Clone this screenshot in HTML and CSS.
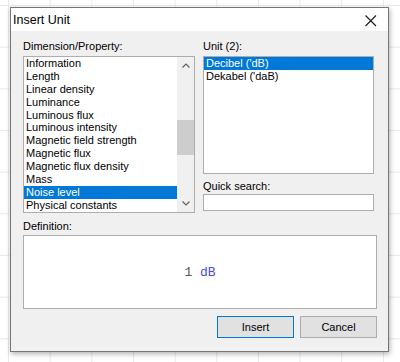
FILE: index.html
```html
<!DOCTYPE html>
<html lang="en">
<head>
    <meta charset="UTF-8">
    <meta name="viewport" content="width=device-width, initial-scale=1.0">
    <title>Insert Unit</title>
    <link rel="stylesheet" href="styles.css">
</head>
<body>
    <div class="dialog">
        <div class="titlebar">
            <span class="title">Insert Unit</span>
            <svg class="close" width="12" height="12" viewBox="0 0 12 12">
                <path d="M0.5 0.5 L11 11 M11 0.5 L0.5 11" stroke="#1a1a1a" stroke-width="1.1" fill="none"/>
            </svg>
        </div>

        <div class="content">
            <div class="columns">
                <div class="col">
                    <div class="label">Dimension/Property:</div>
                    <div class="listbox dims">
                        <div class="items">
                            <div class="item">Information</div>
                            <div class="item">Length</div>
                            <div class="item">Linear density</div>
                            <div class="item">Luminance</div>
                            <div class="item">Luminous flux</div>
                            <div class="item">Luminous intensity</div>
                            <div class="item">Magnetic field strength</div>
                            <div class="item">Magnetic flux</div>
                            <div class="item">Magnetic flux density</div>
                            <div class="item">Mass</div>
                            <div class="item selected">Noise level</div>
                            <div class="item">Physical constants</div>
                        </div>
                        <div class="scrollbar">
                            <div class="arrow">
                                <svg width="8" height="5" viewBox="0 0 8 5"><path d="M0.5 4.5 L4 1 L7.5 4.5" stroke="#606060" stroke-width="1.2" fill="none"/></svg>
                            </div>
                            <div class="track"><div class="thumb"></div></div>
                            <div class="arrow">
                                <svg width="8" height="5" viewBox="0 0 8 5"><path d="M0.5 0.5 L4 4 L7.5 0.5" stroke="#606060" stroke-width="1.2" fill="none"/></svg>
                            </div>
                        </div>
                    </div>
                </div>

                <div class="col">
                    <div class="label">Unit (2):</div>
                    <div class="listbox units">
                        <div class="items">
                            <div class="item selected">Decibel ('dB)</div>
                            <div class="item">Dekabel ('daB)</div>
                        </div>
                    </div>
                    <div class="label search-label">Quick search:</div>
                    <input type="text" class="search">
                </div>
            </div>

            <div class="label def-label">Definition:</div>
            <div class="definition">
                <span class="formula"><span class="num">1</span> <span class="unit">dB</span></span>
            </div>

            <div class="buttons">
                <button class="btn default">Insert</button>
                <button class="btn">Cancel</button>
            </div>
        </div>
    </div>
</body>
</html>
```

FILE: styles.css
```css
body {
    margin: 0;
    width: 400px;
    height: 362px;
    font-family: 'Liberation Sans', Arial, sans-serif;
    font-size: 11px;
    color: #000;
    background-color: #fff;
    background-image:
        linear-gradient(to right, #e9e9e9 1px, transparent 1px),
        linear-gradient(to bottom, #e9e9e9 1px, transparent 1px);
    background-size: 41.67px 41.67px;
    background-position: 8px 5px;
    overflow: hidden;
}

.dialog {
    margin: 7px 0 0 10px;
    width: 377px;
    height: 343px;
    border: 1px solid #767676;
    background-color: #f0f0f0;
    box-shadow: 1px 2px 5px rgba(0, 0, 0, 0.3);
}

.titlebar {
    height: 23px;
    background-color: #fff;
    display: flex;
    align-items: center;
    justify-content: space-between;
    padding: 0 11px 0 2px;
}

.title {
    font-size: 12.5px;
    padding-top: 1px;
}

.close {
    margin-top: 2px;
}

.content {
    padding: 9px 11px 0 12px;
}

.columns {
    display: grid;
    grid-template-columns: 172px 171px;
    column-gap: 8px;
    height: 173px;
}

.label {
    height: 16px;
    line-height: 13px;
}

.listbox {
    background-color: #fff;
    border: 1px solid #adadad;
    display: flex;
    overflow: hidden;
}

.dims {
    height: 155px;
}

.units {
    height: 116px;
}

.items {
    flex: 1;
    overflow: hidden;
}

.item {
    height: 12.9px;
    line-height: 12.9px;
    padding-left: 2px;
    white-space: nowrap;
}

.item.selected {
    background-color: #0078d7;
    color: #fff;
}

.scrollbar {
    width: 17px;
    background-color: #f0f0f0;
    display: flex;
    flex-direction: column;
}

.arrow {
    height: 17px;
    display: flex;
    align-items: center;
    justify-content: center;
}

.track {
    flex: 1;
}

.thumb {
    margin-top: 46px;
    height: 35px;
    background-color: #cdcdcd;
}

.search-label {
    margin-top: 6px;
    height: 14px;
}

.search {
    display: block;
    box-sizing: border-box;
    width: 171px;
    height: 17px;
    margin: 0;
    border: 1px solid #adadad;
    background-color: #fff;
    padding: 0 2px;
}

.def-label {
    margin-top: 7px;
    height: 15px;
}

.definition {
    box-sizing: border-box;
    height: 74px;
    border: 1px solid #adadad;
    background-color: #fff;
    display: flex;
    align-items: center;
    justify-content: center;
    font-family: 'Liberation Mono', 'Courier New', monospace;
    font-size: 13px;
}

.formula {
    white-space: pre;
}

.num {
    color: #555;
}

.unit {
    color: #4848f0;
}

.buttons {
    margin-top: 7px;
    display: flex;
    justify-content: flex-end;
    gap: 6px;
}

.btn {
    box-sizing: border-box;
    width: 77px;
    height: 22px;
    margin: 0;
    padding: 0;
    font-family: 'Liberation Sans', Arial, sans-serif;
    font-size: 11px;
    color: #000;
    background-color: #e1e1e1;
    border: 1px solid #adadad;
}

.btn.default {
    border-color: #0078d7;
}
```
